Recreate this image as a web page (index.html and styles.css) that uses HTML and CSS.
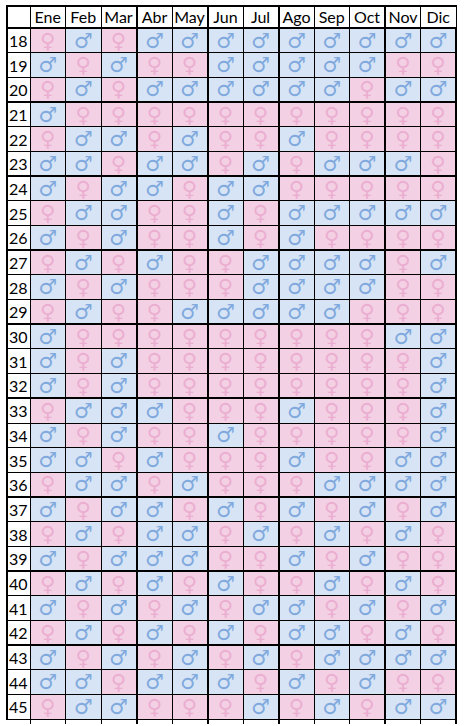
FILE: index.html
```html
<!DOCTYPE html>
<html lang="es">
<head>
<meta charset="utf-8">
<title>Calendario chino</title>
<link rel="stylesheet" href="styles.css">
</head>
<body>
<table class="chart">
<colgroup>
<col class="c-age">
<col><col><col>
<col class="tk"><col>
<col class="tk"><col>
<col class="tk"><col><col>
<col class="tk"><col>
</colgroup>
<thead>
<tr class="head"><th></th><th>Ene</th><th>Feb</th><th>Mar</th><th>Abr</th><th>May</th><th>Jun</th><th>Jul</th><th>Ago</th><th>Sep</th><th>Oct</th><th>Nov</th><th>Dic</th></tr>
</thead>
<tbody>
<tr><td class="age">18</td><td class="f">♀</td><td class="m">♂</td><td class="f">♀</td><td class="m">♂</td><td class="m">♂</td><td class="m">♂</td><td class="m">♂</td><td class="m">♂</td><td class="m">♂</td><td class="m">♂</td><td class="m">♂</td><td class="m">♂</td></tr>
<tr><td class="age">19</td><td class="m">♂</td><td class="f">♀</td><td class="m">♂</td><td class="f">♀</td><td class="f">♀</td><td class="m">♂</td><td class="m">♂</td><td class="m">♂</td><td class="m">♂</td><td class="m">♂</td><td class="f">♀</td><td class="f">♀</td></tr>
<tr><td class="age">20</td><td class="f">♀</td><td class="m">♂</td><td class="f">♀</td><td class="m">♂</td><td class="m">♂</td><td class="m">♂</td><td class="m">♂</td><td class="m">♂</td><td class="m">♂</td><td class="f">♀</td><td class="m">♂</td><td class="m">♂</td></tr>
<tr class="tk"><td class="age">21</td><td class="m">♂</td><td class="f">♀</td><td class="f">♀</td><td class="f">♀</td><td class="f">♀</td><td class="f">♀</td><td class="f">♀</td><td class="f">♀</td><td class="f">♀</td><td class="f">♀</td><td class="f">♀</td><td class="f">♀</td></tr>
<tr><td class="age">22</td><td class="f">♀</td><td class="m">♂</td><td class="m">♂</td><td class="f">♀</td><td class="m">♂</td><td class="f">♀</td><td class="f">♀</td><td class="m">♂</td><td class="f">♀</td><td class="f">♀</td><td class="f">♀</td><td class="f">♀</td></tr>
<tr><td class="age">23</td><td class="m">♂</td><td class="m">♂</td><td class="f">♀</td><td class="m">♂</td><td class="m">♂</td><td class="f">♀</td><td class="m">♂</td><td class="f">♀</td><td class="m">♂</td><td class="m">♂</td><td class="m">♂</td><td class="f">♀</td></tr>
<tr class="tk"><td class="age">24</td><td class="m">♂</td><td class="f">♀</td><td class="m">♂</td><td class="m">♂</td><td class="f">♀</td><td class="m">♂</td><td class="m">♂</td><td class="f">♀</td><td class="f">♀</td><td class="f">♀</td><td class="f">♀</td><td class="f">♀</td></tr>
<tr><td class="age">25</td><td class="f">♀</td><td class="m">♂</td><td class="m">♂</td><td class="f">♀</td><td class="f">♀</td><td class="m">♂</td><td class="f">♀</td><td class="m">♂</td><td class="m">♂</td><td class="m">♂</td><td class="m">♂</td><td class="m">♂</td></tr>
<tr><td class="age">26</td><td class="m">♂</td><td class="f">♀</td><td class="m">♂</td><td class="f">♀</td><td class="f">♀</td><td class="m">♂</td><td class="f">♀</td><td class="m">♂</td><td class="f">♀</td><td class="f">♀</td><td class="f">♀</td><td class="f">♀</td></tr>
<tr class="tk"><td class="age">27</td><td class="f">♀</td><td class="m">♂</td><td class="f">♀</td><td class="m">♂</td><td class="f">♀</td><td class="f">♀</td><td class="m">♂</td><td class="m">♂</td><td class="m">♂</td><td class="m">♂</td><td class="f">♀</td><td class="m">♂</td></tr>
<tr><td class="age">28</td><td class="m">♂</td><td class="f">♀</td><td class="m">♂</td><td class="f">♀</td><td class="f">♀</td><td class="f">♀</td><td class="m">♂</td><td class="m">♂</td><td class="m">♂</td><td class="m">♂</td><td class="f">♀</td><td class="f">♀</td></tr>
<tr><td class="age">29</td><td class="f">♀</td><td class="m">♂</td><td class="f">♀</td><td class="f">♀</td><td class="m">♂</td><td class="m">♂</td><td class="m">♂</td><td class="m">♂</td><td class="m">♂</td><td class="f">♀</td><td class="f">♀</td><td class="f">♀</td></tr>
<tr class="tk"><td class="age">30</td><td class="m">♂</td><td class="f">♀</td><td class="f">♀</td><td class="f">♀</td><td class="f">♀</td><td class="f">♀</td><td class="f">♀</td><td class="f">♀</td><td class="f">♀</td><td class="f">♀</td><td class="m">♂</td><td class="m">♂</td></tr>
<tr><td class="age">31</td><td class="m">♂</td><td class="f">♀</td><td class="m">♂</td><td class="f">♀</td><td class="f">♀</td><td class="f">♀</td><td class="f">♀</td><td class="f">♀</td><td class="f">♀</td><td class="f">♀</td><td class="f">♀</td><td class="m">♂</td></tr>
<tr><td class="age">32</td><td class="m">♂</td><td class="f">♀</td><td class="m">♂</td><td class="f">♀</td><td class="f">♀</td><td class="f">♀</td><td class="f">♀</td><td class="f">♀</td><td class="f">♀</td><td class="f">♀</td><td class="f">♀</td><td class="m">♂</td></tr>
<tr class="tk"><td class="age">33</td><td class="f">♀</td><td class="m">♂</td><td class="m">♂</td><td class="m">♂</td><td class="f">♀</td><td class="f">♀</td><td class="f">♀</td><td class="m">♂</td><td class="f">♀</td><td class="f">♀</td><td class="f">♀</td><td class="m">♂</td></tr>
<tr><td class="age">34</td><td class="m">♂</td><td class="f">♀</td><td class="m">♂</td><td class="f">♀</td><td class="f">♀</td><td class="m">♂</td><td class="f">♀</td><td class="f">♀</td><td class="f">♀</td><td class="f">♀</td><td class="f">♀</td><td class="m">♂</td></tr>
<tr><td class="age">35</td><td class="m">♂</td><td class="m">♂</td><td class="f">♀</td><td class="m">♂</td><td class="f">♀</td><td class="f">♀</td><td class="f">♀</td><td class="m">♂</td><td class="f">♀</td><td class="f">♀</td><td class="m">♂</td><td class="m">♂</td></tr>
<tr><td class="age">36</td><td class="f">♀</td><td class="m">♂</td><td class="m">♂</td><td class="f">♀</td><td class="m">♂</td><td class="f">♀</td><td class="f">♀</td><td class="f">♀</td><td class="m">♂</td><td class="m">♂</td><td class="m">♂</td><td class="m">♂</td></tr>
<tr class="tk"><td class="age">37</td><td class="m">♂</td><td class="f">♀</td><td class="m">♂</td><td class="m">♂</td><td class="f">♀</td><td class="m">♂</td><td class="f">♀</td><td class="m">♂</td><td class="f">♀</td><td class="m">♂</td><td class="f">♀</td><td class="m">♂</td></tr>
<tr><td class="age">38</td><td class="f">♀</td><td class="m">♂</td><td class="f">♀</td><td class="m">♂</td><td class="m">♂</td><td class="f">♀</td><td class="m">♂</td><td class="f">♀</td><td class="m">♂</td><td class="f">♀</td><td class="m">♂</td><td class="f">♀</td></tr>
<tr><td class="age">39</td><td class="m">♂</td><td class="f">♀</td><td class="m">♂</td><td class="m">♂</td><td class="m">♂</td><td class="f">♀</td><td class="f">♀</td><td class="m">♂</td><td class="f">♀</td><td class="m">♂</td><td class="f">♀</td><td class="f">♀</td></tr>
<tr class="tk"><td class="age">40</td><td class="f">♀</td><td class="m">♂</td><td class="f">♀</td><td class="m">♂</td><td class="f">♀</td><td class="m">♂</td><td class="f">♀</td><td class="f">♀</td><td class="m">♂</td><td class="f">♀</td><td class="m">♂</td><td class="f">♀</td></tr>
<tr><td class="age">41</td><td class="m">♂</td><td class="f">♀</td><td class="m">♂</td><td class="f">♀</td><td class="m">♂</td><td class="f">♀</td><td class="m">♂</td><td class="m">♂</td><td class="f">♀</td><td class="m">♂</td><td class="f">♀</td><td class="m">♂</td></tr>
<tr><td class="age">42</td><td class="f">♀</td><td class="m">♂</td><td class="f">♀</td><td class="m">♂</td><td class="f">♀</td><td class="m">♂</td><td class="f">♀</td><td class="m">♂</td><td class="m">♂</td><td class="f">♀</td><td class="m">♂</td><td class="f">♀</td></tr>
<tr class="tk"><td class="age">43</td><td class="m">♂</td><td class="f">♀</td><td class="m">♂</td><td class="f">♀</td><td class="m">♂</td><td class="f">♀</td><td class="m">♂</td><td class="f">♀</td><td class="m">♂</td><td class="m">♂</td><td class="m">♂</td><td class="m">♂</td></tr>
<tr><td class="age">44</td><td class="m">♂</td><td class="m">♂</td><td class="f">♀</td><td class="m">♂</td><td class="m">♂</td><td class="m">♂</td><td class="f">♀</td><td class="m">♂</td><td class="f">♀</td><td class="m">♂</td><td class="f">♀</td><td class="f">♀</td></tr>
<tr><td class="age">45</td><td class="f">♀</td><td class="m">♂</td><td class="m">♂</td><td class="f">♀</td><td class="f">♀</td><td class="f">♀</td><td class="m">♂</td><td class="f">♀</td><td class="m">♂</td><td class="f">♀</td><td class="m">♂</td><td class="m">♂</td></tr>
<tr class="tail"><td></td><td></td><td></td><td></td><td></td><td></td><td></td><td></td><td></td><td></td><td></td><td></td><td></td></tr>
</tbody>
</table>
</body>
</html>
```
FILE: styles.css
```css
html, body {
  margin: 0;
  padding: 0;
  background: #ffffff;
}

body {
  padding: 5px 0 0 6px;
  font-family: Lato, "Open Sans", "Liberation Sans", sans-serif;
  color: #000;
}

.chart {
  border-collapse: collapse;
  table-layout: fixed;
  width: 451px;
}

.chart col.c-age {
  width: 23px;
}

.chart col.tk {
  border-left: 2px solid #000;
}

.chart th,
.chart td {
  border: 1px solid #000;
  padding: 0;
  white-space: nowrap;
}

.chart .head th {
  height: 20px;
  font-weight: normal;
  font-size: 16px;
  line-height: 20px;
  text-align: center;
  background: #fff;
  border-bottom: 2px solid #000;
  border-top: 2px solid #000;
}

.chart .head th:first-child {
  border-left: 2px solid #000;
}

.chart tbody tr {
  height: 24.7px;
}

.chart tbody tr.tk td {
  border-top: 2px solid #000;
}

.chart td.age {
  font-size: 16px;
  text-align: right;
  padding-right: 2px;
  background: #fff;
  border-left: 2px solid #000;
}

.chart td.f,
.chart td.m {
  font-family: "DejaVu Sans ExtraLight", "DejaVu Sans", sans-serif;
  font-size: 21px;
  line-height: 22px;
  text-align: center;
}

.chart td.f {
  background: #f3d0e3;
  color: #ebaed1;
}

.chart td.m {
  background: #d7e4f5;
  color: #80a9dd;
}

.chart tbody tr td:last-child {
  border-right: 2px solid #000;
}

.chart tr.tail {
  height: 4px;
}

.chart tr.tail td {
  height: 4px;
  border-bottom: none;
  background: #fff;
}

.chart tr.tail td:first-child {
  border-left: none;
}
```
